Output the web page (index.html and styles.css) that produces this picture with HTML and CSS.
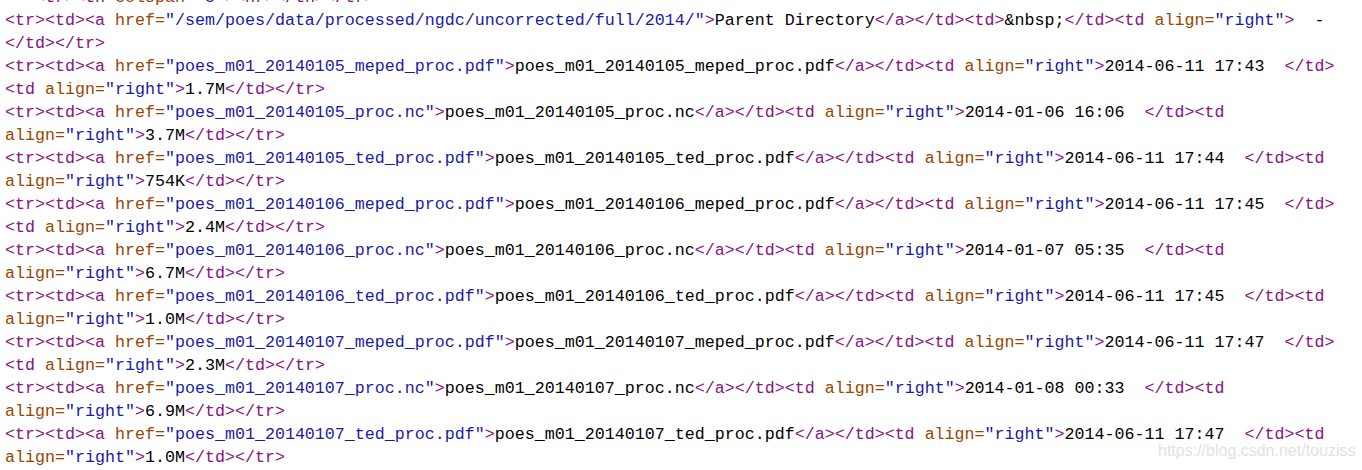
FILE: index.html
```html
<!DOCTYPE html>
<html>
<head>
<meta charset="utf-8">
<link rel="stylesheet" href="styles.css">
</head>
<body>
<div class="src">
<div class="ln">   <span class="t">&lt;tr&gt;&lt;th <span class="n">colspan=</span><span class="v">"5"</span>&gt;&lt;hr&gt;&lt;/th&gt;&lt;/tr&gt;</span></div>
<div class="ln"><span class="t">&lt;tr&gt;&lt;td&gt;&lt;a <span class="n">href=</span><span class="v">"/sem/poes/data/processed/ngdc/uncorrected/full/2014/"</span>&gt;</span>Parent Directory<span class="t">&lt;/a&gt;&lt;/td&gt;&lt;td&gt;</span>&amp;nbsp;<span class="t">&lt;/td&gt;&lt;td <span class="n">align=</span><span class="v">"right"</span>&gt;</span>  - </div>
<div class="ln"><span class="t">&lt;/td&gt;&lt;/tr&gt;</span></div>

<div class="ln"><span class="t">&lt;tr&gt;&lt;td&gt;&lt;a <span class="n">href=</span><span class="v">"poes_m01_20140105_meped_proc.pdf"</span>&gt;</span>poes_m01_20140105_meped_proc.pdf<span class="t">&lt;/a&gt;&lt;/td&gt;&lt;td <span class="n">align=</span><span class="v">"right"</span>&gt;</span>2014-06-11 17:43  <span class="t">&lt;/td&gt;</span></div>
<div class="ln"><span class="t">&lt;td <span class="n">align=</span><span class="v">"right"</span>&gt;</span>1.7M<span class="t">&lt;/td&gt;&lt;/tr&gt;</span></div>

<div class="ln"><span class="t">&lt;tr&gt;&lt;td&gt;&lt;a <span class="n">href=</span><span class="v">"poes_m01_20140105_proc.nc"</span>&gt;</span>poes_m01_20140105_proc.nc<span class="t">&lt;/a&gt;&lt;/td&gt;&lt;td <span class="n">align=</span><span class="v">"right"</span>&gt;</span>2014-01-06 16:06  <span class="t">&lt;/td&gt;&lt;td</span></div>
<div class="ln"><span class="t"><span class="n">align=</span><span class="v">"right"</span>&gt;</span>3.7M<span class="t">&lt;/td&gt;&lt;/tr&gt;</span></div>

<div class="ln"><span class="t">&lt;tr&gt;&lt;td&gt;&lt;a <span class="n">href=</span><span class="v">"poes_m01_20140105_ted_proc.pdf"</span>&gt;</span>poes_m01_20140105_ted_proc.pdf<span class="t">&lt;/a&gt;&lt;/td&gt;&lt;td <span class="n">align=</span><span class="v">"right"</span>&gt;</span>2014-06-11 17:44  <span class="t">&lt;/td&gt;&lt;td</span></div>
<div class="ln"><span class="t"><span class="n">align=</span><span class="v">"right"</span>&gt;</span>754K<span class="t">&lt;/td&gt;&lt;/tr&gt;</span></div>

<div class="ln"><span class="t">&lt;tr&gt;&lt;td&gt;&lt;a <span class="n">href=</span><span class="v">"poes_m01_20140106_meped_proc.pdf"</span>&gt;</span>poes_m01_20140106_meped_proc.pdf<span class="t">&lt;/a&gt;&lt;/td&gt;&lt;td <span class="n">align=</span><span class="v">"right"</span>&gt;</span>2014-06-11 17:45  <span class="t">&lt;/td&gt;</span></div>
<div class="ln"><span class="t">&lt;td <span class="n">align=</span><span class="v">"right"</span>&gt;</span>2.4M<span class="t">&lt;/td&gt;&lt;/tr&gt;</span></div>

<div class="ln"><span class="t">&lt;tr&gt;&lt;td&gt;&lt;a <span class="n">href=</span><span class="v">"poes_m01_20140106_proc.nc"</span>&gt;</span>poes_m01_20140106_proc.nc<span class="t">&lt;/a&gt;&lt;/td&gt;&lt;td <span class="n">align=</span><span class="v">"right"</span>&gt;</span>2014-01-07 05:35  <span class="t">&lt;/td&gt;&lt;td</span></div>
<div class="ln"><span class="t"><span class="n">align=</span><span class="v">"right"</span>&gt;</span>6.7M<span class="t">&lt;/td&gt;&lt;/tr&gt;</span></div>

<div class="ln"><span class="t">&lt;tr&gt;&lt;td&gt;&lt;a <span class="n">href=</span><span class="v">"poes_m01_20140106_ted_proc.pdf"</span>&gt;</span>poes_m01_20140106_ted_proc.pdf<span class="t">&lt;/a&gt;&lt;/td&gt;&lt;td <span class="n">align=</span><span class="v">"right"</span>&gt;</span>2014-06-11 17:45  <span class="t">&lt;/td&gt;&lt;td</span></div>
<div class="ln"><span class="t"><span class="n">align=</span><span class="v">"right"</span>&gt;</span>1.0M<span class="t">&lt;/td&gt;&lt;/tr&gt;</span></div>

<div class="ln"><span class="t">&lt;tr&gt;&lt;td&gt;&lt;a <span class="n">href=</span><span class="v">"poes_m01_20140107_meped_proc.pdf"</span>&gt;</span>poes_m01_20140107_meped_proc.pdf<span class="t">&lt;/a&gt;&lt;/td&gt;&lt;td <span class="n">align=</span><span class="v">"right"</span>&gt;</span>2014-06-11 17:47  <span class="t">&lt;/td&gt;</span></div>
<div class="ln"><span class="t">&lt;td <span class="n">align=</span><span class="v">"right"</span>&gt;</span>2.3M<span class="t">&lt;/td&gt;&lt;/tr&gt;</span></div>

<div class="ln"><span class="t">&lt;tr&gt;&lt;td&gt;&lt;a <span class="n">href=</span><span class="v">"poes_m01_20140107_proc.nc"</span>&gt;</span>poes_m01_20140107_proc.nc<span class="t">&lt;/a&gt;&lt;/td&gt;&lt;td <span class="n">align=</span><span class="v">"right"</span>&gt;</span>2014-01-08 00:33  <span class="t">&lt;/td&gt;&lt;td</span></div>
<div class="ln"><span class="t"><span class="n">align=</span><span class="v">"right"</span>&gt;</span>6.9M<span class="t">&lt;/td&gt;&lt;/tr&gt;</span></div>

<div class="ln"><span class="t">&lt;tr&gt;&lt;td&gt;&lt;a <span class="n">href=</span><span class="v">"poes_m01_20140107_ted_proc.pdf"</span>&gt;</span>poes_m01_20140107_ted_proc.pdf<span class="t">&lt;/a&gt;&lt;/td&gt;&lt;td <span class="n">align=</span><span class="v">"right"</span>&gt;</span>2014-06-11 17:47  <span class="t">&lt;/td&gt;&lt;td</span></div>
<div class="ln"><span class="t"><span class="n">align=</span><span class="v">"right"</span>&gt;</span>1.0M<span class="t">&lt;/td&gt;&lt;/tr&gt;</span></div>
</div>
<div class="wm">https://blog.csdn.net/touziss</div>
</body>
</html>
```

FILE: styles.css
```css
html, body {
  margin: 0;
  padding: 0;
  background: #ffffff;
  overflow: hidden;
}
body {
  position: relative;
  width: 1362px;
  height: 470px;
}
.src {
  margin-top: -14px;
  padding-left: 5px;
  font-family: "Liberation Mono", "DejaVu Sans Mono", monospace;
  font-size: 16.6667px;
  line-height: 23px;
  color: #000000;
}
.ln {
  white-space: pre;
  height: 23px;
}
.t { color: #881280; }
.n { color: #994500; }
.v { color: #1a1aa6; }
.wm {
  position: absolute;
  left: 1158px;
  top: 441px;
  font-family: "Liberation Sans", Arial, sans-serif;
  font-size: 16px;
  line-height: 20px;
  color: #e2e2e2;
  white-space: nowrap;
}
```
